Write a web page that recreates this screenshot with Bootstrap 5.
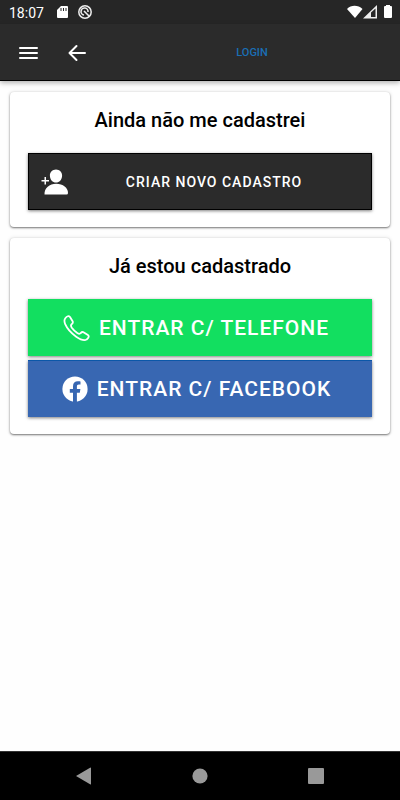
<!DOCTYPE html>
<html lang="pt-BR">
<head>
<meta charset="utf-8">
<meta name="viewport" content="width=device-width, initial-scale=1">
<title>Login</title>
<link href="https://cdn.jsdelivr.net/npm/bootstrap@5.3.0/dist/css/bootstrap.min.css" rel="stylesheet">
<style>
  body { font-family: Roboto, "Liberation Sans", sans-serif; background: #fefefe; }
  svg { display: block; flex: none; }
  .status-bar { height: 24px; padding: 2px 7px 0 9px; background: #262626; font-size: 14px; line-height: 22px; }
  .app-bar { height: 57px; padding: 2px 0 0 16px; background: #2b2b2b; border-bottom: 1px solid #000; box-shadow: 0 2px 5px rgba(0,0,0,.3); }
  .icon-btn { width: 24px; height: 24px; border: 0; background: none; color: #fff; }
  .app-title { font-size: 11px; line-height: 16px; font-weight: 500; color: #1a6fb5; }
  .content { padding: 11px 10px; gap: 11px; }
  .panel { border: 0; border-radius: 4px; padding: 16px 18px 17px; box-shadow: 0 1px 2px rgba(0,0,0,.5), 0 0 4px rgba(0,0,0,.12); }
  .panel-title { font-size: 20px; line-height: 24px; font-weight: 500; color: #000; margin-bottom: 21px; }
  .action { height: 57px; border-radius: 0; border: 0; padding: 0 16px 0 8px; font-size: 21px; line-height: 24px; font-weight: 500; letter-spacing: 1px; color: #fff; box-shadow: 0 1px 3px rgba(0,0,0,.5); }
  .action:hover { color: #fff; }
  .action-new { background: #2b2b2b; border: 1px solid #000; font-size: 14px; padding: 0 12px; }
  .action-phone { background: #12df60; }
  .action-facebook { background: #3867b2; border-top: 1px solid #0b57a8; }
  .stack { gap: 4px; }
  .system-nav { height: 49px; padding: 0 26px; background: #000; border-top: 1px solid #333; }
  .system-nav .icon-btn { color: #999; }
</style>
<script src="https://cdn.jsdelivr.net/npm/bootstrap@5.3.0/dist/js/bootstrap.bundle.min.js"></script>
</head>
<body class="min-vh-100 d-flex flex-column">
  <div class="status-bar d-flex align-items-center text-white">
    <span>18:07</span>
    <svg class="ms-2 me-auto" width="44" height="16" viewBox="0 1 44 16" aria-hidden="true">
      <path fill="#fff" d="M9 2h6a1 1 0 0 1 1 1v10a1 1 0 0 1-1 1H6a1 1 0 0 1-1-1V6z"/>
      <path stroke="#262626" d="M9 4v3M11.500 4v3M14 4v3"/>
      <g fill="none" stroke="#eee"><circle cx="33" cy="8" r="6.200" stroke-width="1.500"/><path stroke-width="1.600" d="M32 11a3.500 3.500 0 1 1 4-3M32 7l5 5"/></g>
    </svg>
    <svg width="47" height="16" viewBox="0 1 47 16" aria-hidden="true">
      <path fill="#fff" d="M1 5C5 .8 12 .8 16.500 5L9 14z"/>
      <path fill="#eee" fill-rule="evenodd" d="M17 14.500L31 1v13.500zM25 8.500V13h4.500V4.500z"/>
      <path fill="#fff" d="M38 2h2V1h4v1h1q1 0 1 1v10q0 1-1 1h-6q-1 0-1-1V3q0-1 1-1z"/>
    </svg>
  </div>

  <header class="app-bar d-flex align-items-center">
    <button type="button" class="icon-btn p-0" aria-label="Menu">
      <svg width="24" height="24" viewBox="0 0 24 24" stroke="#fff" stroke-width="2" stroke-linecap="round"><path d="M4 7h17M4 12h17M4 17h17"/></svg>
    </button>
    <button type="button" class="icon-btn p-0 ms-4 me-3" aria-label="Voltar">
      <svg width="24" height="24" viewBox="0 0 24 24" fill="none" stroke="#fff" stroke-width="2" stroke-linecap="round" stroke-linejoin="round"><path d="M21 12H6M12.500 5L5.500 12l7 7"/></svg>
    </button>
    <h1 class="app-title flex-grow-1 text-center mb-0">LOGIN</h1>
  </header>

  <main class="content d-flex flex-column flex-grow-1">
    <section class="card panel">
      <h2 class="panel-title text-center">Ainda não me cadastrei</h2>
      <button type="button" class="btn action action-new w-100 d-flex align-items-center">
        <svg width="28" height="28" viewBox="0 0 28 28" fill="#fff" aria-hidden="true"><path d="M15 1.500c3.500 0 6.300 2.800 6.100 6.300-.2 4-2.700 6.800-6.100 6.800S9.100 11.800 8.900 7.800C8.700 4.300 11.500 1.500 15 1.500z"/><path d="M3.500 26.500C3.200 20 8.500 15.800 15.200 15.800S27.200 20 27 25q0 1.500-1.500 1.500zM3.500 9h1.500v3h3v1.500H5v3H3.500v-3h-3V12h3z"/></svg>
        <span class="flex-grow-1 text-center">CRIAR NOVO CADASTRO</span>
      </button>
    </section>

    <section class="card panel">
      <h2 class="panel-title text-center">Já estou cadastrado</h2>
      <div class="stack d-flex flex-column">
        <button type="button" class="btn action action-phone d-flex align-items-center justify-content-center">
          <svg class="me-2" width="28" height="28" viewBox="0 0 28 28" fill="none" stroke="#fff" stroke-width="1.800" stroke-linejoin="round" aria-hidden="true"><path d="M2.300 4.200C4 2.100 5.700 1.500 7 3l2.600 4.200c.7 1.500.1 2.300-1 3.100-1.200 1-.8 1.900.2 3.400 1.700 2.300 3.300 3.900 5.500 5.400 1.600 1 2.500 1.300 3.400 0 1-1.200 1.900-1.500 3.200-.7l4 2.700c1.500 1 .8 2.900-1.200 4.300-2.300 1.700-5.800.5-10.500-2.700C8.600 19.500 4.300 15 2.200 10.200 1.200 7.700 1.100 5.700 2.300 4.200z"/></svg>
          <span>ENTRAR C/ TELEFONE</span>
        </button>
        <button type="button" class="btn action action-facebook d-flex align-items-center justify-content-center">
          <svg class="me-2" width="28" height="28" viewBox="0 0 28 28" aria-hidden="true"><circle cx="14" cy="14" r="12.600" fill="#fff"/><path fill="#3867b2" d="M12 27v-9.300H8.800V14H12v-2.800c0-3.300 1.900-5 4.800-5 1.400 0 2.700.2 2.700.2v3.200h-1.600c-1.500 0-2 .9-2 1.900V14h3.500l-.6 3.700h-2.900V27z"/></svg>
          <span>ENTRAR C/ FACEBOOK</span>
        </button>
      </div>
    </section>
  </main>

  <nav class="system-nav d-flex align-items-center justify-content-around" aria-label="Sistema">
    <button type="button" class="icon-btn p-0" aria-label="Voltar"><svg width="24" height="24" viewBox="0 0 24 24" fill="currentColor"><path d="M4 12L18.500 3.500q.5 0 .5.500v16q0 .5-.5.500z"/></svg></button>
    <button type="button" class="icon-btn p-0" aria-label="Início"><svg width="24" height="24" viewBox="0 0 24 24" fill="currentColor"><circle cx="12" cy="12" r="7.600"/></svg></button>
    <button type="button" class="icon-btn p-0" aria-label="Recentes"><svg width="24" height="24" viewBox="0 0 24 24" fill="currentColor"><rect x="4" y="4" width="16" height="16" rx="1"/></svg></button>
  </nav>
</body>
</html>
